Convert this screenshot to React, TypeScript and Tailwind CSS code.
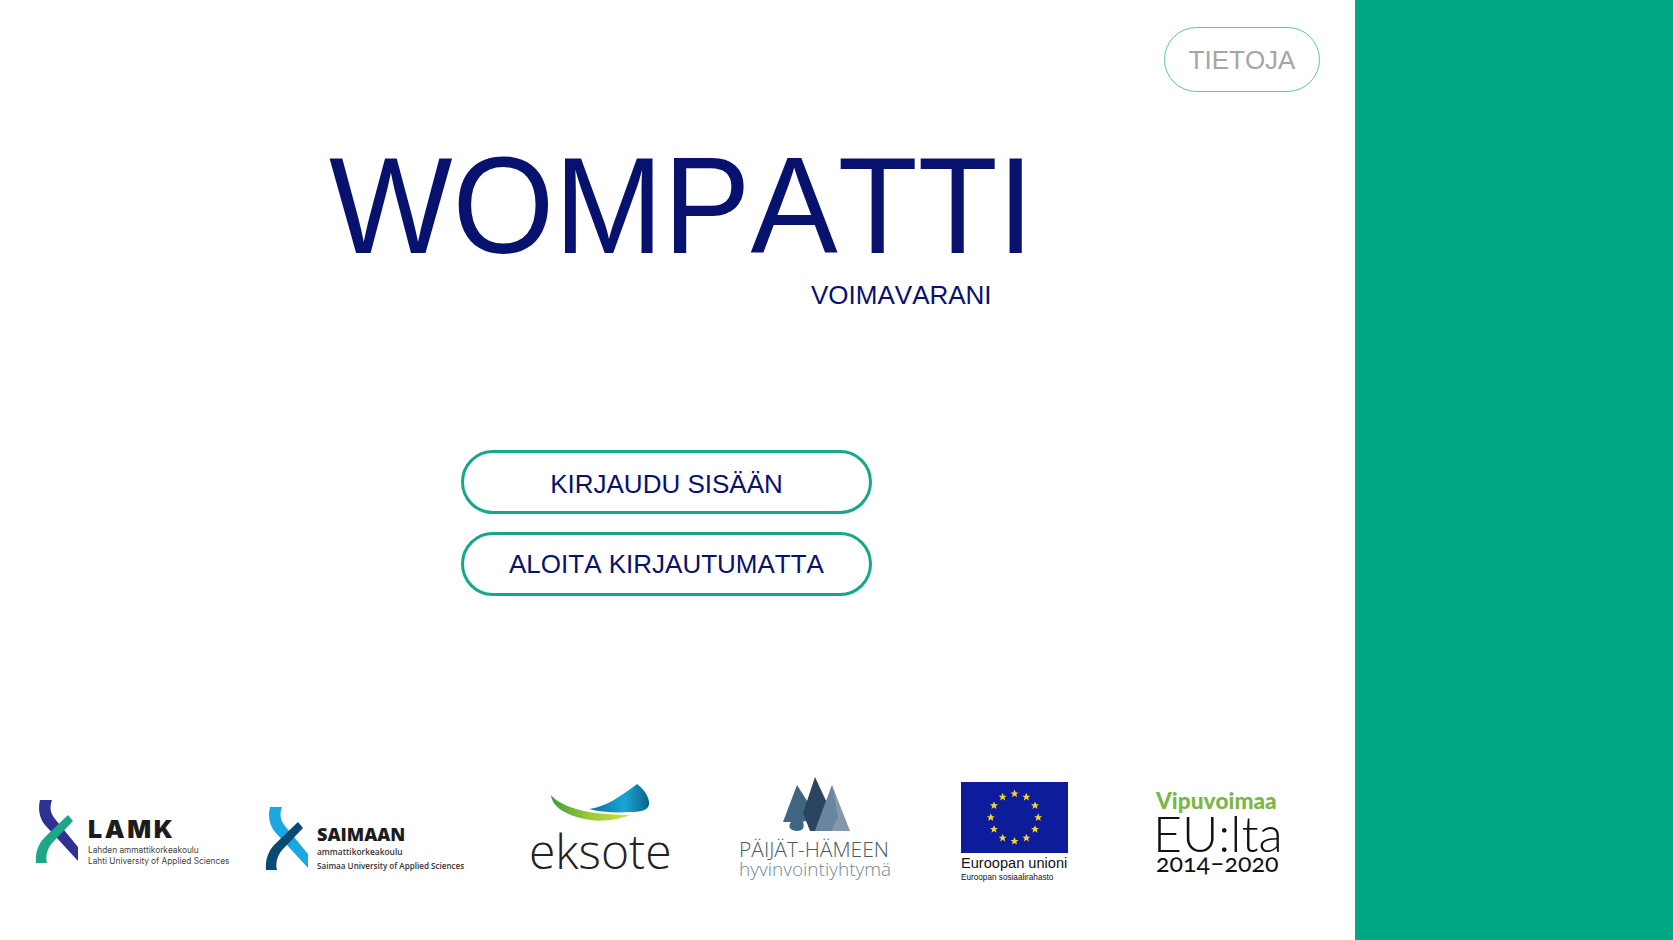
const arial = "font-['Liberation_Sans',Arial,sans-serif]";

const LamkMark = ({ back, front }: { back: string; front: string }) => (
  <svg width="43" height="63" viewBox="0 0 43 63" className="shrink-0">
    <path d="M5 0H17C14 8 16 14 20 19L43 47V61L10 25C4 18 3 8 5 0Z" fill={back} />
    <path d="M33 15L38 21L19 41C13 47 10 55 12 63H1C0 53 3 44 10 37Z" fill={front} />
  </svg>
);

const EksoteMark = () => (
  <svg width="100" height="40" viewBox="0 0 100 40" className="block">
    <defs>
      <linearGradient id="eksGreen" x1="0" x2="1" y1="0" y2="0">
        <stop offset="0" stopColor="#3f9e35" />
        <stop offset="0.5" stopColor="#9ccb3b" />
        <stop offset="1" stopColor="#d5df3a" />
      </linearGradient>
      <linearGradient id="eksBlue" x1="0" x2="1" y1="0" y2="0">
        <stop offset="0" stopColor="#0a6f9e" />
        <stop offset="0.6" stopColor="#1aa5d6" />
        <stop offset="1" stopColor="#0a628c" />
      </linearGradient>
    </defs>
    <path d="M1 12C2 22 12 32 40 37C55 39 70 36 80 32C60 32 35 30 20 24C10 20 4 16 1 12Z" fill="url(#eksGreen)" />
    <path d="M39 26C55 24 70 14 87 1C97 8 100 18 99 22C97 28 90 29 80 29C65 30 50 29 39 26Z" fill="url(#eksBlue)" />
  </svg>
);

const PhhykMark = () => (
  <svg width="67" height="55" viewBox="0 0 67 55" className="block">
    <path d="M14 8L0 45H8C4 50 8 54 14 54C20 54 22 50 20 45C22 43 24 44 25 46C25 51 28 54 35 54H40L28 30Z" fill="#3f6580" />
    <path d="M32 0L20 36L27 54H35L45 28Z" fill="#2b4560" />
    <path d="M49 8L32 54H67Z" fill="#8298ad" />
    <path d="M49 8L32 54H48L55 40Z" fill="#5f7d97" fillOpacity="0.7" />
  </svg>
);

const EuFlag = () => {
  const stars = Array.from({ length: 12 }, (_, i) => {
    const a = (i * Math.PI) / 6;
    return [53.5 + 23.7 * Math.sin(a), 35.5 - 23.7 * Math.cos(a)];
  });
  return (
    <svg width="107" height="71" viewBox="0 0 107 71" className="block">
      <rect width="107" height="71" fill="#0c1c9b" />
      {stars.map(([x, y], i) => (
        <polygon
          key={i}
          transform={`translate(${x} ${y}) scale(4.2)`}
          points="0,-1 0.29,-0.31 0.95,-0.31 0.43,0.12 0.59,0.81 0,0.4 -0.59,0.81 -0.43,0.12 -0.95,-0.31 -0.29,-0.31"
          fill="#f6d22f"
        />
      ))}
    </svg>
  );
};

const LogoRow = () => (
  <div className="flex items-start pl-[35px] text-black">
    {/* LAMK */}
    <div className="flex w-[230px] shrink-0 gap-[10px] pt-[23px]">
      <LamkMark back="#2e3192" front="#1aa886" />
      <div className="pt-[16px] font-['Inter',sans-serif] text-[#444]">
        <p className="text-[25px] leading-[26px] font-black tracking-[2.6px] text-[#1c1c1c]">LAMK</p>
        <p className="mt-[3px] text-[8.3px] leading-[11px] whitespace-nowrap">Lahden ammattikorkeakoulu</p>
        <p className="text-[8.3px] leading-[11px] whitespace-nowrap">Lahti University of Applied Sciences</p>
      </div>
    </div>
    {/* Saimaan */}
    <div className="flex w-[267px] shrink-0 gap-[9px] pt-[30px]">
      <LamkMark back="#1ba7e0" front="#0b4a70" />
      <div className="pt-[15px] font-['Open_Sans',sans-serif] text-[#333]">
        <p className="text-[18px] leading-[24px] font-extrabold text-[#1c1c1c]">SAIMAAN</p>
        <p className="text-[8.4px] leading-[12px] font-semibold whitespace-nowrap">ammattikorkeakoulu</p>
        <p className="mt-[2px] text-[8.1px] leading-[12px] font-semibold whitespace-nowrap">Saimaa University of Applied Sciences</p>
      </div>
    </div>
    {/* Eksote */}
    <div className="flex w-[207px] shrink-0 flex-col pt-[6px] pl-[18px]">
      <EksoteMark />
      <p className="mt-[-2px] -ml-[21px] font-['Open_Sans',sans-serif] text-[48px] leading-[60px] font-light text-[#222]">eksote</p>
    </div>
    {/* Paijat-Hame */}
    <div className="flex w-[222px] shrink-0 flex-col items-start">
      <div className="pl-[44px]">
        <PhhykMark />
      </div>
      <p className="mt-[7px] font-['Open_Sans',sans-serif] text-[21px] leading-[20px] font-light whitespace-nowrap text-[#4a5a68]">PÄIJÄT-HÄMEEN</p>
      <p className="font-['Open_Sans',sans-serif] text-[19px] leading-[20px] font-light whitespace-nowrap text-[#6f8899]">hyvinvointiyhtymä</p>
    </div>
    {/* EU */}
    <div className="w-[195px] shrink-0 pt-[5px]">
      <EuFlag />
      <p className={`${arial} mt-[1px] text-[14.6px] leading-[18px] whitespace-nowrap text-[#111]`}>Euroopan unioni</p>
      <p className={`${arial} text-[8.2px] leading-[11px] whitespace-nowrap text-[#111]`}>Euroopan sosiaalirahasto</p>
    </div>
    {/* Vipuvoimaa */}
    <div className="shrink-0 pt-[12px] font-['Lato',sans-serif]">
      <p className="text-[22.6px] leading-[24px] font-black whitespace-nowrap text-[#7ab648]">Vipuvoimaa</p>
      <p className="-ml-[3px] text-[50px] leading-[40px] font-light whitespace-nowrap text-[#111]">EU:lta</p>
      <p className="-mt-[3px] text-[25px] leading-[24px] font-normal whitespace-nowrap text-[#111] [font-variant-numeric:oldstyle-nums]">2014–2020</p>
    </div>
  </div>
);

export default function App() {
  return (
    <div className={`${arial} flex h-[940px] w-full overflow-hidden bg-white [font-kerning:none]`}>
      <main className="flex min-w-0 flex-1 flex-col">
        <div className="flex justify-end pt-[27px] pr-[35px]">
          <button className="h-[65px] w-[156px] rounded-full border border-[#5fc3ad] pt-[1px] text-[26px] text-[#a6a6a6]">TIETOJA</button>
        </div>
        <h1 className="mt-[39px] pl-[329px] text-[137px] leading-[149px] whitespace-nowrap text-[#07126f]">
          <span className="inline-block origin-left scale-x-[0.955]">WOMPATTI</span>
        </h1>
        <p className="pl-[811px] text-[26px] leading-[30px] text-[#07126f]">VOIMAVARANI</p>
        <div className="mt-[140px] ml-[461px] flex w-[411px] flex-col gap-[18px]">
          <button className="h-[64px] rounded-full border-[3px] border-[#14a888] pt-[4px] text-[26px] text-[#07126f]">KIRJAUDU SISÄÄN</button>
          <button className="h-[64px] rounded-full border-[3px] border-[#14a888] pt-[1px] text-[26px] text-[#07126f]">ALOITA KIRJAUTUMATTA</button>
        </div>
        <div className="mt-[181px]">
          <LogoRow />
        </div>
      </main>
      <aside className="w-[318px] shrink-0 bg-[#00a886]" />
    </div>
  );
}
